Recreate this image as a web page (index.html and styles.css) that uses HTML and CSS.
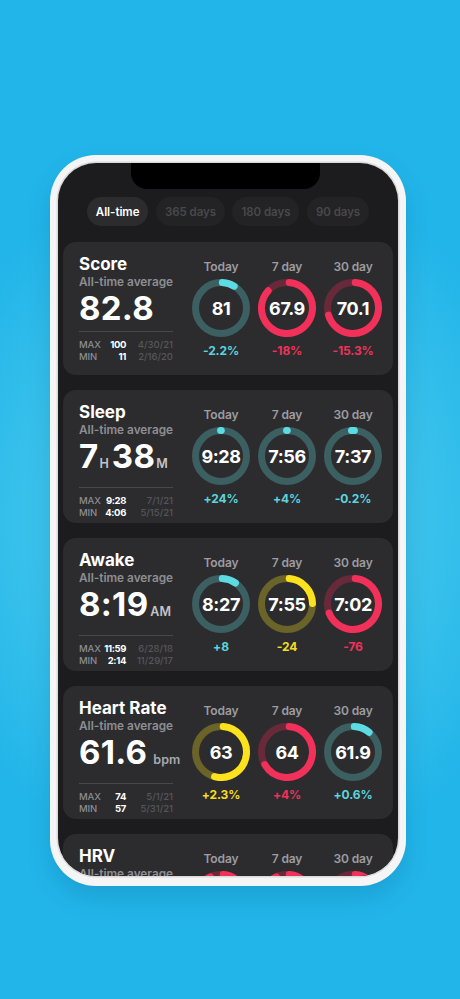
FILE: index.html
```html
<!DOCTYPE html>
<html>
<head>
<meta charset="utf-8">
<link rel="stylesheet" href="styles.css">
</head>
<body>
<div class="phone">
  <div class="screen">
    <div class="notch"></div>
    <div class="tabs">
      <div class="tab active">All-time</div>
      <div class="tab">365 days</div>
      <div class="tab">180 days</div>
      <div class="tab">90 days</div>
    </div>
    <div class="cards">
      <!-- Score -->
      <div class="card">
        <div class="left">
          <div class="title">Score</div>
          <div class="sub">All-time average</div>
          <div class="big">82.8</div>
          <div class="divider"></div>
          <div class="stats">
            <span class="lbl">MAX</span><span class="sv">100</span><span class="date">4/30/21</span>
            <span class="lbl">MIN</span><span class="sv">11</span><span class="date">2/16/20</span>
          </div>
        </div>
        <div class="cols">
          <div class="col"><div class="lab">Today</div>
            <div class="ring"><svg viewBox="0 0 58 58"><circle class="track teal" cx="29" cy="29" r="25.5"/><circle class="arc cyan" cx="29" cy="29" r="25.5" stroke-dasharray="12.5 200" transform="rotate(-87 29 29)"/></svg><span class="rv">81</span></div>
            <div class="pct c-cyan">-2.2%</div></div>
          <div class="col"><div class="lab">7 day</div>
            <div class="ring"><svg viewBox="0 0 58 58"><circle class="track dred" cx="29" cy="29" r="25.5"/><circle class="arc red" cx="29" cy="29" r="25.5" stroke-dasharray="136 200" transform="rotate(-85 29 29)"/></svg><span class="rv">67.9</span></div>
            <div class="pct c-red">-18%</div></div>
          <div class="col"><div class="lab">30 day</div>
            <div class="ring"><svg viewBox="0 0 58 58"><circle class="track dred" cx="29" cy="29" r="25.5"/><circle class="arc red" cx="29" cy="29" r="25.5" stroke-dasharray="110 200" transform="rotate(-85 29 29)"/></svg><span class="rv">70.1</span></div>
            <div class="pct c-red">-15.3%</div></div>
        </div>
      </div>
      <!-- Sleep -->
      <div class="card">
        <div class="left">
          <div class="title">Sleep</div>
          <div class="sub">All-time average</div>
          <div class="big">7<span class="unit">H</span><span class="gap"></span>38<span class="unit">M</span></div>
          <div class="divider"></div>
          <div class="stats">
            <span class="lbl">MAX</span><span class="sv">9:28</span><span class="date">7/1/21</span>
            <span class="lbl">MIN</span><span class="sv">4:06</span><span class="date">5/15/21</span>
          </div>
        </div>
        <div class="cols">
          <div class="col"><div class="lab">Today</div>
            <div class="ring"><svg viewBox="0 0 58 58"><circle class="track teal" cx="29" cy="29" r="25.5"/><circle class="arc cyan" cx="29" cy="29" r="25.5" stroke-dasharray="0.8 200" transform="rotate(-91 29 29)"/></svg><span class="rv">9:28</span></div>
            <div class="pct c-cyan">+24%</div></div>
          <div class="col"><div class="lab">7 day</div>
            <div class="ring"><svg viewBox="0 0 58 58"><circle class="track teal" cx="29" cy="29" r="25.5"/><circle class="arc cyan" cx="29" cy="29" r="25.5" stroke-dasharray="0.8 200" transform="rotate(-91 29 29)"/></svg><span class="rv">7:56</span></div>
            <div class="pct c-cyan">+4%</div></div>
          <div class="col"><div class="lab">30 day</div>
            <div class="ring"><svg viewBox="0 0 58 58"><circle class="track teal" cx="29" cy="29" r="25.5"/><circle class="arc cyan" cx="29" cy="29" r="25.5" stroke-dasharray="3 200" transform="rotate(-93.4 29 29)"/></svg><span class="rv">7:37</span></div>
            <div class="pct c-cyan">-0.2%</div></div>
        </div>
      </div>
      <!-- Awake -->
      <div class="card">
        <div class="left">
          <div class="title">Awake</div>
          <div class="sub">All-time average</div>
          <div class="big">8:19<span class="unit am">AM</span></div>
          <div class="divider"></div>
          <div class="stats">
            <span class="lbl">MAX</span><span class="sv">11:59</span><span class="date">6/28/18</span>
            <span class="lbl">MIN</span><span class="sv">2:14</span><span class="date">11/29/17</span>
          </div>
        </div>
        <div class="cols">
          <div class="col"><div class="lab">Today</div>
            <div class="ring"><svg viewBox="0 0 58 58"><circle class="track teal" cx="29" cy="29" r="25.5"/><circle class="arc cyan" cx="29" cy="29" r="25.5" stroke-dasharray="14 200" transform="rotate(-87 29 29)"/></svg><span class="rv">8:27</span></div>
            <div class="pct c-cyan">+8</div></div>
          <div class="col"><div class="lab">7 day</div>
            <div class="ring"><svg viewBox="0 0 58 58"><circle class="track dyel" cx="29" cy="29" r="25.5"/><circle class="arc yel" cx="29" cy="29" r="25.5" stroke-dasharray="37 200" transform="rotate(-85 29 29)"/></svg><span class="rv">7:55</span></div>
            <div class="pct c-yel">-24</div></div>
          <div class="col"><div class="lab">30 day</div>
            <div class="ring"><svg viewBox="0 0 58 58"><circle class="track dred" cx="29" cy="29" r="25.5"/><circle class="arc red" cx="29" cy="29" r="25.5" stroke-dasharray="108 200" transform="rotate(-85 29 29)"/></svg><span class="rv">7:02</span></div>
            <div class="pct c-red">-76</div></div>
        </div>
      </div>
      <!-- Heart Rate -->
      <div class="card">
        <div class="left">
          <div class="title">Heart Rate</div>
          <div class="sub">All-time average</div>
          <div class="big">61.6<span class="unit bpm">bpm</span></div>
          <div class="divider"></div>
          <div class="stats">
            <span class="lbl">MAX</span><span class="sv">74</span><span class="date">5/1/21</span>
            <span class="lbl">MIN</span><span class="sv">57</span><span class="date">5/31/21</span>
          </div>
        </div>
        <div class="cols">
          <div class="col"><div class="lab">Today</div>
            <div class="ring"><svg viewBox="0 0 58 58"><circle class="track dyel" cx="29" cy="29" r="25.5"/><circle class="arc yel" cx="29" cy="29" r="25.5" stroke-dasharray="84 200" transform="rotate(-85 29 29)"/></svg><span class="rv">63</span></div>
            <div class="pct c-yel">+2.3%</div></div>
          <div class="col"><div class="lab">7 day</div>
            <div class="ring"><svg viewBox="0 0 58 58"><circle class="track dred" cx="29" cy="29" r="25.5"/><circle class="arc red" cx="29" cy="29" r="25.5" stroke-dasharray="104 200" transform="rotate(-85 29 29)"/></svg><span class="rv">64</span></div>
            <div class="pct c-red">+4%</div></div>
          <div class="col"><div class="lab">30 day</div>
            <div class="ring"><svg viewBox="0 0 58 58"><circle class="track teal" cx="29" cy="29" r="25.5"/><circle class="arc cyan" cx="29" cy="29" r="25.5" stroke-dasharray="16 200" transform="rotate(-87 29 29)"/></svg><span class="rv">61.9</span></div>
            <div class="pct c-cyan">+0.6%</div></div>
        </div>
      </div>
      <!-- HRV -->
      <div class="card">
        <div class="left">
          <div class="title">HRV</div>
          <div class="sub">All-time average</div>
        </div>
        <div class="cols">
          <div class="col"><div class="lab">Today</div>
            <div class="ring"><svg viewBox="0 0 58 58"><circle class="track dred" cx="29" cy="29" r="25.5"/><circle class="arc red" cx="29" cy="29" r="25.5" stroke-dasharray="146 200" transform="rotate(-85 29 29)"/></svg></div></div>
          <div class="col"><div class="lab">7 day</div>
            <div class="ring"><svg viewBox="0 0 58 58"><circle class="track dred" cx="29" cy="29" r="25.5"/><circle class="arc red" cx="29" cy="29" r="25.5" stroke-dasharray="146 200" transform="rotate(-85 29 29)"/></svg></div></div>
          <div class="col"><div class="lab">30 day</div>
            <div class="ring"><svg viewBox="0 0 58 58"><circle class="track dred" cx="29" cy="29" r="25.5"/><circle class="arc red" cx="29" cy="29" r="25.5" stroke-dasharray="80 200" transform="rotate(-85 29 29)"/></svg></div></div>
        </div>
      </div>
    </div>
  </div>
</div>
</body>
</html>
```
FILE: styles.css
```css
html, body {
  margin: 0;
  padding: 0;
}
body {
  width: 460px;
  height: 999px;
  overflow: hidden;
  font-family: Inter, "Noto Sans", "Liberation Sans", sans-serif;
  background: radial-gradient(ellipse 70% 36% at 50% 52%, #62d7ef 0%, #40c5ec 50%, #22b5e9 100%);
}
.phone {
  margin: 155px 0 0 50px;
  width: 356px;
  height: 731px;
  box-sizing: border-box;
  padding: 8px 8px 10px;
  border-radius: 46px;
  background: #f5f5f5;
  box-shadow: 0 12px 22px rgba(10, 90, 140, 0.22);
}
.screen {
  position: relative;
  height: 100%;
  border-radius: 38px;
  background: #1c1c1e;
  overflow: hidden;
  box-shadow: 0 0 0 1.5px #dadada;
}
.notch {
  position: absolute;
  left: 73px;
  top: 0;
  width: 189px;
  height: 26px;
  background: #000;
  border-radius: 0 0 16px 16px;
}
.tabs {
  display: flex;
  justify-content: center;
  gap: 7.5px;
  padding-top: 34px;
}
.tab {
  height: 29px;
  padding: 0 9px;
  border-radius: 15px;
  background: #232325;
  color: #48484c;
  font-size: 11.5px;
  font-weight: 600;
  letter-spacing: -0.05px;
  display: flex;
  align-items: center;
}
.tab.active {
  background: #2c2c2e;
  color: #fff;
}
.cards {
  display: flex;
  flex-direction: column;
  gap: 15px;
  padding: 16px 5px 0;
}
.card {
  flex: none;
  height: 133px;
  box-sizing: border-box;
  background: #2c2c2e;
  border-radius: 13px;
  display: flex;
  padding: 0 7px 0 16px;
}
.left {
  width: 109px;
  flex: none;
  padding-top: 12px;
}
.title {
  font-size: 17px;
  font-weight: 700;
  line-height: 20px;
  color: #fff;
}
.sub {
  font-size: 11.8px;
  font-weight: 600;
  line-height: 16px;
  color: #8e8e93;
  white-space: nowrap;
}
.big {
  font-size: 33px;
  font-weight: 700;
  line-height: 36px;
  color: #fff;
  letter-spacing: 0.3px;
  white-space: nowrap;
}
.unit {
  font-size: 12.5px;
  font-weight: 600;
  color: #c4c4c8;
  letter-spacing: 0;
  margin-left: 1px;
}
.unit.am {
  margin-left: 2px;
}
.unit.bpm {
  margin-left: 6px;
  color: #a9a9ae;
}
.gap {
  display: inline-block;
  width: 3px;
}
.divider {
  width: 94px;
  height: 1px;
  background: #48484c;
  margin-top: 5px;
}
.stats {
  margin-top: 7px;
  display: grid;
  grid-template-columns: 21px 26px 47px;
  font-size: 9.5px;
  line-height: 12px;
  white-space: nowrap;
}
.lbl {
  color: #8e8e93;
  font-weight: 500;
  letter-spacing: -0.1px;
}
.sv {
  display: flex;
  justify-content: flex-end;
  color: #fff;
  font-weight: 700;
  letter-spacing: -0.35px;
}
.date {
  display: flex;
  justify-content: flex-end;
  color: #56565b;
  font-weight: 500;
}
.cols {
  display: flex;
}
.col {
  width: 66px;
  display: flex;
  flex-direction: column;
  align-items: center;
  padding-top: 17px;
}
.lab {
  font-size: 12px;
  font-weight: 600;
  line-height: 15px;
  color: #9c9ca1;
  letter-spacing: -0.1px;
}
.ring {
  margin-top: 5px;
  width: 58px;
  height: 58px;
  display: grid;
}
.ring > * {
  grid-area: 1 / 1;
}
.ring svg {
  width: 58px;
  height: 58px;
  display: block;
}
.rv {
  place-self: center;
  font-size: 18px;
  font-weight: 700;
  color: #fff;
  letter-spacing: -0.4px;
}
.track, .arc {
  fill: none;
  stroke-width: 7;
}
.arc {
  stroke-linecap: round;
}
.track.teal { stroke: #3c5f62; }
.track.dred { stroke: #682a3b; }
.track.dyel { stroke: #6b6429; }
.arc.cyan { stroke: #5cdbe3; }
.arc.red { stroke: #f2315b; }
.arc.yel { stroke: #fbe21d; }
.pct {
  margin-top: 6px;
  font-size: 12px;
  font-weight: 700;
  line-height: 15px;
  letter-spacing: -0.1px;
}
.c-cyan { color: #5ad5de; }
.c-red { color: #f0325a; }
.c-yel { color: #f6dd1f; }
```
